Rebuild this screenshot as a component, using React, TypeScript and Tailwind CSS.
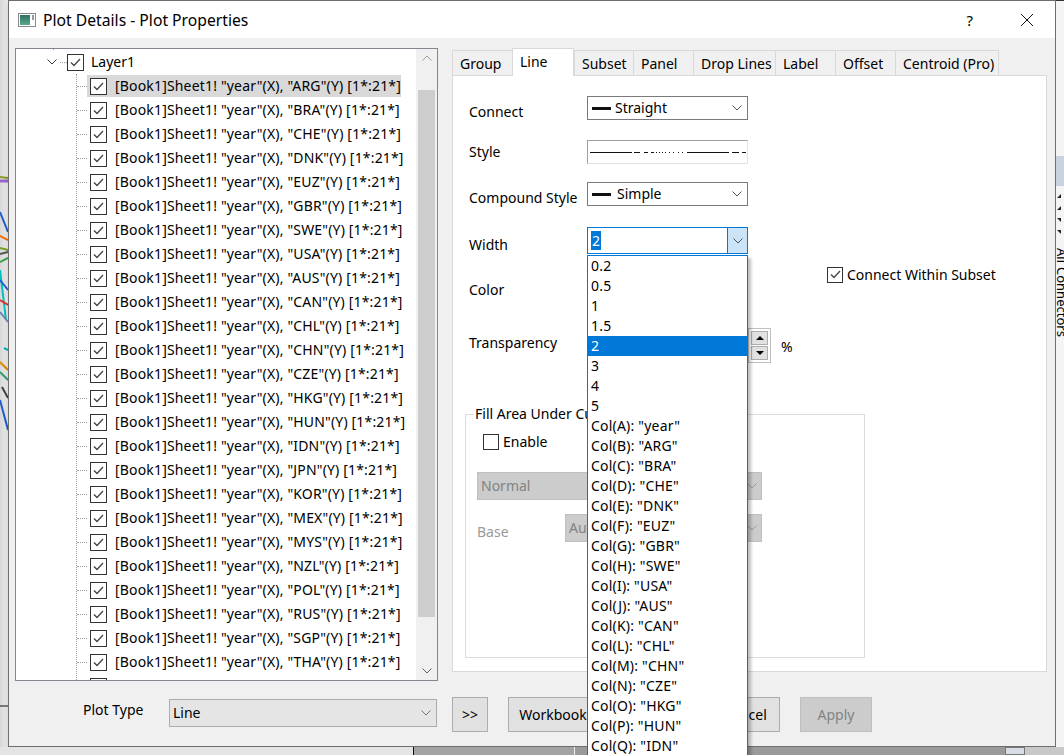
import React from 'react'

const countries = [
  'ARG', 'BRA', 'CHE', 'DNK', 'EUZ', 'GBR', 'SWE', 'USA', 'AUS', 'CAN', 'CHL', 'CHN', 'CZE',
  'HKG', 'HUN', 'IDN', 'JPN', 'KOR', 'MEX', 'MYS', 'NZL', 'POL', 'RUS', 'SGP', 'THA', 'TUR',
]

const widthOptions = ['0.2', '0.5', '1', '1.5', '2', '3', '4', '5']
const colOptions = [
  ['A', 'year'], ['B', 'ARG'], ['C', 'BRA'], ['D', 'CHE'], ['E', 'DNK'], ['F', 'EUZ'],
  ['G', 'GBR'], ['H', 'SWE'], ['I', 'USA'], ['J', 'AUS'], ['K', 'CAN'], ['L', 'CHL'],
  ['M', 'CHN'], ['N', 'CZE'], ['O', 'HKG'], ['P', 'HUN'], ['Q', 'IDN'],
]

const tabs = [
  { label: 'Group', w: 'w-[60px]' },
  { label: 'Line', w: 'w-[62px]', active: true },
  { label: 'Subset', w: 'w-[59px]' },
  { label: 'Panel', w: 'w-[60px]' },
  { label: 'Drop Lines', w: 'w-[82px]' },
  { label: 'Label', w: 'w-[60px]' },
  { label: 'Offset', w: 'w-[60px]' },
  { label: 'Centroid (Pro)', w: 'w-[104px]' },
]

function Check({ checked = true, size = 'h-[17px] w-[17px]' }: { checked?: boolean; size?: string }) {
  return (
    <span className={`flex shrink-0 items-center justify-center border border-[#333333] bg-white ${size}`}>
      {checked && (
        <svg width="11" height="9" viewBox="0 0 11 9">
          <path d="M1 4.5 L4 7.5 L10 1" fill="none" stroke="#444" strokeWidth="1.3" />
        </svg>
      )}
    </span>
  )
}

function Chevron({ color = '#555' }: { color?: string }) {
  return (
    <svg width="10" height="6" viewBox="0 0 10 6" className="shrink-0">
      <path d="M0.5 0.5 L5 5 L9.5 0.5" fill="none" stroke={color} strokeWidth="1" />
    </svg>
  )
}

function TitleIcon() {
  return (
    <svg width="18" height="14" viewBox="0 0 18 14">
      <defs>
        <linearGradient id="ti" x1="0" y1="0" x2="0" y2="1">
          <stop offset="0" stopColor="#2f6f66" />
          <stop offset="1" stopColor="#5aa88a" />
        </linearGradient>
      </defs>
      <rect x="0.5" y="0.5" width="17" height="13" fill="#fff" stroke="#8a8a8a" />
      <rect x="2" y="2" width="10" height="10" fill="url(#ti)" />
      <rect x="14" y="2" width="2" height="5" fill="#9a9a9a" />
    </svg>
  )
}

function LeftDesk() {
  return (
    <div className="w-[8px] shrink-0 bg-gradient-to-r from-[#d6d6d6] to-[#eeeeee]">
      <svg width="8" height="747" viewBox="0 0 8 747">
        <line x1="0" y1="177" x2="8" y2="178" stroke="#8a9a20" strokeWidth="2" />
        <line x1="0" y1="181" x2="8" y2="181" stroke="#9966cc" strokeWidth="3" />
        <line x1="0" y1="212" x2="8" y2="232" stroke="#1f5fd0" strokeWidth="2" />
        <line x1="0" y1="236" x2="8" y2="240" stroke="#ff6a00" strokeWidth="2" />
        <line x1="0" y1="248" x2="8" y2="250" stroke="#77a020" strokeWidth="2" />
        <line x1="0" y1="254" x2="8" y2="252" stroke="#555" strokeWidth="2" />
        <line x1="0" y1="262" x2="8" y2="258" stroke="#3aa040" strokeWidth="2" />
        <line x1="0" y1="270" x2="6" y2="320" stroke="#00c0c0" strokeWidth="2" />
        <line x1="0" y1="280" x2="8" y2="290" stroke="#1f5fd0" strokeWidth="2" />
        <line x1="0" y1="300" x2="8" y2="305" stroke="#e03030" strokeWidth="2" />
        <line x1="0" y1="312" x2="8" y2="322" stroke="#6688bb" strokeWidth="2" />
        <line x1="4" y1="348" x2="8" y2="350" stroke="#00b0b0" strokeWidth="2" />
        <line x1="0" y1="362" x2="8" y2="370" stroke="#e08a00" strokeWidth="2" />
        <line x1="0" y1="372" x2="8" y2="380" stroke="#30a070" strokeWidth="2" />
        <line x1="2" y1="387" x2="8" y2="398" stroke="#404040" strokeWidth="2" />
        <line x1="0" y1="400" x2="8" y2="430" stroke="#1f5fd0" strokeWidth="2" />
        <line x1="0" y1="706" x2="8" y2="706" stroke="#111" strokeWidth="1" />
      </svg>
    </div>
  )
}

function RightDesk() {
  return (
    <div className="flex flex-1 flex-col bg-[#f4f4f4]">
      <div className="h-[1px] bg-[#333]" />
      <div className="h-[155px]" />
      <div className="h-[30px] bg-[#c9d2df]" />
      <div className="flex flex-col gap-[8px] pt-[8px] pl-[1px]">
        <span className="h-0 w-0 border-t-[4px] border-r-[4px] border-t-transparent border-r-[#222]" />
        <span className="h-0 w-0 border-t-[4px] border-r-[4px] border-t-transparent border-r-[#222]" />
        <span className="h-0 w-0 border-b-[4px] border-r-[4px] border-b-transparent border-r-[#222]" />
        <span className="h-0 w-0 border-b-[4px] border-r-[4px] border-b-transparent border-r-[#222]" />
      </div>
      <div className="mt-[14px] text-[13px] leading-[12px] [writing-mode:vertical-rl]">All</div>
      <div className="mt-[4px] text-[13px] leading-[12px] [writing-mode:vertical-rl]">Connectors</div>
    </div>
  )
}

function Dropdown({ children }: { children: React.ReactNode }) {
  return (
    <div className="flex h-[24px] w-[161px] items-center border border-[#7a7a7a] bg-white pr-[5px] pl-[4px]">
      <div className="flex flex-1 items-center gap-[4px]">{children}</div>
      <Chevron />
    </div>
  )
}

function TreePanel() {
  return (
    <div className="flex h-[633px] w-[423px] border border-[#828790] bg-white">
      <div className="flex-1 overflow-hidden">
        <div className="ml-[37px] h-[1px] w-[1px] border-l border-dotted border-[#a0a0a0]" />
        <div className="flex h-[24px] items-center">
          <div className="w-[31px]" />
          <Chevron color="#333" />
          <div className="ml-[3px] w-[7px] border-t border-dotted border-[#a0a0a0]" />
          <Check />
          <span className="ml-[7px] leading-[20px]">Layer1</span>
        </div>
        <div className="ml-[60px] border-l border-dotted border-[#a0a0a0]">
          {countries.map((c, i) => (
            <div key={c} className="flex h-[24px] items-center">
              <div className="w-[10px] border-t border-dotted border-[#a0a0a0]" />
              <div
                className={`flex h-[22px] w-[314px] items-center pl-[3px] ${i === 0 ? 'bg-[#d9d9d9]' : ''}`}
              >
                <Check />
                <span className="ml-[8px] whitespace-nowrap leading-[20px] tracking-[0.17px]">
                  [Book1]Sheet1! "year"(X), "{c}"(Y) [1*:21*]
                </span>
              </div>
            </div>
          ))}
        </div>
      </div>
      <div className="flex w-[21px] flex-col bg-[#f0f0f0]">
        <div className="flex h-[17px] items-center justify-center">
          <svg width="10" height="6" viewBox="0 0 10 6">
            <path d="M0.5 5.5 L5 1 L9.5 5.5" fill="none" stroke="#a0a0a0" strokeWidth="1" />
          </svg>
        </div>
        <div className="mx-[2px] mt-[24px] h-[527px] bg-[#cdcdcd]" />
        <div className="flex-1" />
        <div className="flex h-[17px] items-center justify-center pb-[2px]">
          <Chevron color="#606060" />
        </div>
      </div>
    </div>
  )
}

function WidthCombo() {
  return (
    <div className="relative h-[27px] w-[161px]">
      <div className="flex h-full items-center border border-[#0078d7] bg-white">
        <div className="flex flex-1 items-center pl-[3px]">
          <span className="bg-[#0078d7] px-[1px] leading-[19px] text-white">2</span>
        </div>
        <div className="flex h-full w-[20px] items-center justify-center border-l border-[#0078d7] bg-[#cce4f7]">
          <Chevron />
        </div>
      </div>
      <div className="absolute top-[28px] left-0 z-20 w-[161px] border border-[#0078d7] bg-white tracking-[0.2px] shadow-[3px_3px_3px_rgba(0,0,0,0.25)]">
        {widthOptions.map((w) => (
          <div
            key={w}
            className={`h-[20px] pl-[3px] leading-[20px] ${w === '2' ? 'bg-[#0078d7] text-white' : ''}`}
          >
            {w}
          </div>
        ))}
        {colOptions.map(([k, v]) => (
          <div key={k} className="h-[20px] pl-[3px] leading-[20px] whitespace-nowrap">
            Col({k}): "{v}"
          </div>
        ))}
      </div>
    </div>
  )
}

function LinePanel() {
  return (
    <div className="flex h-[597px] flex-col border border-[#d9d9d9] bg-white pl-[12px]">
      <div className="mt-[20px] flex h-[24px] pl-[4px]">
        <span className="w-[118px] pt-[6px] leading-[20px]">Connect</span>
        <Dropdown>
          <span className="h-[3px] w-[19px] bg-[#111]" />
          <span className="leading-[20px]">Straight</span>
        </Dropdown>
      </div>
      <div className="mt-[20px] flex h-[24px] items-center pl-[4px]">
        <span className="w-[118px] leading-[20px]">Style</span>
        <div className="flex h-[24px] w-[161px] items-center border border-t-[#a0a0a0] border-r-[#e3e3e3] border-b-[#e3e3e3] border-l-[#a0a0a0] bg-white">
          <svg width="159" height="5" viewBox="0 0 159 5" shapeRendering="crispEdges">
            <g stroke="#111" strokeWidth="1">
              <line x1="2" y1="2.5" x2="44" y2="2.5" />
              <line x1="46" y1="2.5" x2="52" y2="2.5" />
              <line x1="56" y1="2.5" x2="60" y2="2.5" />
              <line x1="63" y1="2.5" x2="66" y2="2.5" />
              <line x1="68" y1="2.5" x2="69" y2="2.5" />
              <line x1="71" y1="2.5" x2="72" y2="2.5" />
              <line x1="74" y1="2.5" x2="75" y2="2.5" />
              <line x1="77" y1="2.5" x2="78" y2="2.5" />
              <line x1="81" y1="2.5" x2="82" y2="2.5" />
              <line x1="85" y1="2.5" x2="86" y2="2.5" />
              <line x1="90" y1="2.5" x2="91" y2="2.5" />
              <line x1="94" y1="2.5" x2="95" y2="2.5" />
              <line x1="99" y1="2.5" x2="141" y2="2.5" />
              <line x1="144" y1="2.5" x2="151" y2="2.5" />
              <line x1="154" y1="2.5" x2="158" y2="2.5" />
            </g>
          </svg>
        </div>
      </div>
      <div className="mt-[18px] flex h-[24px] pl-[4px]">
        <span className="w-[118px] pt-[6px] leading-[20px] whitespace-nowrap">Compound Style</span>
        <Dropdown>
          <span className="h-[3px] w-[19px] bg-[#111]" />
          <span className="ml-[2px] leading-[20px]">Simple</span>
        </Dropdown>
      </div>
      <div className="mt-[21px] flex h-[27px] pl-[4px]">
        <span className="w-[118px] pt-[8px] leading-[20px]">Width</span>
        <WidthCombo />
      </div>
      <div className="mt-[12px] flex h-[30px] pl-[4px]">
        <span className="w-[118px] pt-[14px] leading-[20px]">Color</span>
        <div className="mt-[4px] h-[26px] w-[161px] border border-[#7a7a7a] bg-white" />
        <div className="ml-[79px] flex h-[17px] items-center gap-[4px]">
          <Check size="h-[16px] w-[16px]" />
          <span className="leading-[20px] whitespace-nowrap">Connect Within Subset</span>
        </div>
      </div>
      <div className="mt-[32px] flex h-[35px] pl-[4px]">
        <span className="w-[118px] pt-[5px] leading-[20px]">Transparency</span>
        <div className="mt-[3px] h-[28px] w-[161px] border border-[#7a7a7a] bg-white" />
        <div className="flex w-[23px] flex-col gap-[1px] border border-[#c0c0c0] p-[2px]">
          <div className="flex flex-1 items-center justify-center border border-[#adadad] bg-[#e1e1e1]">
            <span className="h-0 w-0 border-x-[4px] border-b-[4px] border-x-transparent border-b-black" />
          </div>
          <div className="flex flex-1 items-center justify-center border border-[#adadad] bg-[#e1e1e1]">
            <span className="h-0 w-0 border-x-[4px] border-t-[4px] border-x-transparent border-t-black" />
          </div>
        </div>
        <span className="ml-[10px] pt-[9px] leading-[20px]">%</span>
      </div>
      <fieldset className="mt-[41px] h-[254px] w-[400px] border border-[#dcdcdc] pl-[11px]">
        <legend className="ml-[-3px] px-[1px] leading-[20px]">Fill Area Under Curve</legend>
        <div className="mt-[9px] ml-[6px] flex h-[17px] items-center gap-[4px]">
          <Check checked={false} size="h-[16px] w-[16px]" />
          <span className="leading-[20px]">Enable</span>
        </div>
        <div className="mt-[22px] flex h-[28px] w-[285px] items-center border border-[#bfbfbf] bg-[#cccccc] pr-[4px] pl-[3px] text-[#838383]">
          <span className="flex-1 leading-[20px]">Normal</span>
          <Chevron color="#999" />
        </div>
        <div className="mt-[14px] flex h-[28px] items-start">
          <span className="w-[88px] pt-[8px] leading-[20px] text-[#9a9a9a]">Base</span>
          <div className="flex h-[28px] w-[197px] items-center border border-[#bfbfbf] bg-[#cccccc] pr-[4px] pl-[3px] text-[#838383]">
            <span className="flex-1 leading-[20px]">Auto</span>
            <Chevron color="#999" />
          </div>
        </div>
      </fieldset>
    </div>
  )
}

function Button({ children, w, disabled = false }: { children: React.ReactNode; w: string; disabled?: boolean }) {
  return (
    <div
      className={`flex h-[35px] items-center justify-center border leading-[20px] ${w} ${
        disabled ? 'border-[#bfbfbf] bg-[#cccccc] text-[#838383]' : 'border-[#adadad] bg-[#e1e1e1]'
      }`}
    >
      {children}
    </div>
  )
}

function Dialog() {
  return (
    <div className="flex h-[747px] w-[1048px] shrink-0 flex-col border border-[#6e6e6e] bg-[#f0f0f0] shadow-[2px_2px_6px_rgba(0,0,0,0.35)]">
      <div className="flex h-[37px] items-center bg-white">
        <div className="ml-[9px]">
          <TitleIcon />
        </div>
        <span className="ml-[7px] text-[15.7px] leading-[20px]">Plot Details - Plot Properties</span>
        <span className="ml-auto text-[15px] leading-[20px]">?</span>
        <div className="mr-[21px] ml-[47px]">
          <svg width="14" height="14" viewBox="0 0 14 14">
            <path d="M1 1 L13 13 M13 1 L1 13" stroke="#111" strokeWidth="1" />
          </svg>
        </div>
      </div>
      <div className="flex flex-1 pt-[10px] pl-[6px]">
        <div className="flex flex-col">
          <TreePanel />
          <div className="mt-[18px] flex h-[28px] items-start">
            <span className="mt-[1px] ml-[68px] w-[86px] leading-[20px]">Plot Type</span>
            <div className="flex h-[28px] w-[268px] items-center border border-[#acacac] bg-[#e5e5e5] pr-[5px] pl-[3px]">
              <span className="flex-1 leading-[20px]">Line</span>
              <Chevron color="#777" />
            </div>
          </div>
        </div>
        <div className="ml-[14px] flex w-[595px] flex-col">
          <div className="flex h-[27px] items-end">
            {tabs.map((t, i) => (
              <div
                key={t.label}
                className={`${t.w} shrink-0 border-t border-l border-[#d9d9d9] pl-[7px] leading-[20px] whitespace-nowrap ${
                  i === tabs.length - 1 ? 'border-r' : ''
                } ${
                  t.active
                    ? 'relative z-10 mb-[-1px] h-[28px] border-r bg-white pt-[3px]'
                    : 'h-[25px] bg-[#f0f0f0] pt-[3px]'
                }`}
              >
                {t.label}
              </div>
            ))}
          </div>
          <LinePanel />
          <div className="mt-[25px] flex gap-[20px]">
            <Button w="w-[36px]">&gt;&gt;</Button>
            <Button w="w-[90px]">Workbook</Button>
            <Button w="w-[72px]">OK</Button>
            <Button w="w-[70px]">Cancel</Button>
            <Button w="w-[72px]" disabled>
              Apply
            </Button>
          </div>
        </div>
      </div>
    </div>
  )
}

export default function App() {
  return (
    <div className="relative h-[755px] w-[1064px] overflow-hidden bg-[#c8c8c8] font-['Noto_Sans',sans-serif] text-[14px] text-black">
      <div className="flex h-[747px]">
        <LeftDesk />
        <Dialog />
        <RightDesk />
      </div>
      <div className="flex h-[8px]">
        <div className="w-[413px] bg-[#e4e4e4]" />
        <div className="w-[1px] bg-[#111]" />
        <div className="w-[160px] bg-[#a3a3a3]" />
        <div className="w-[1px] bg-[#eeeeee]" />
        <div className="w-[430px] bg-[#9a9a9a]" />
        <div className="w-[20px] border border-[#777] bg-[#d8dce6]" />
        <div className="flex-1 bg-[#c8c8c8]" />
      </div>
    </div>
  )
}
